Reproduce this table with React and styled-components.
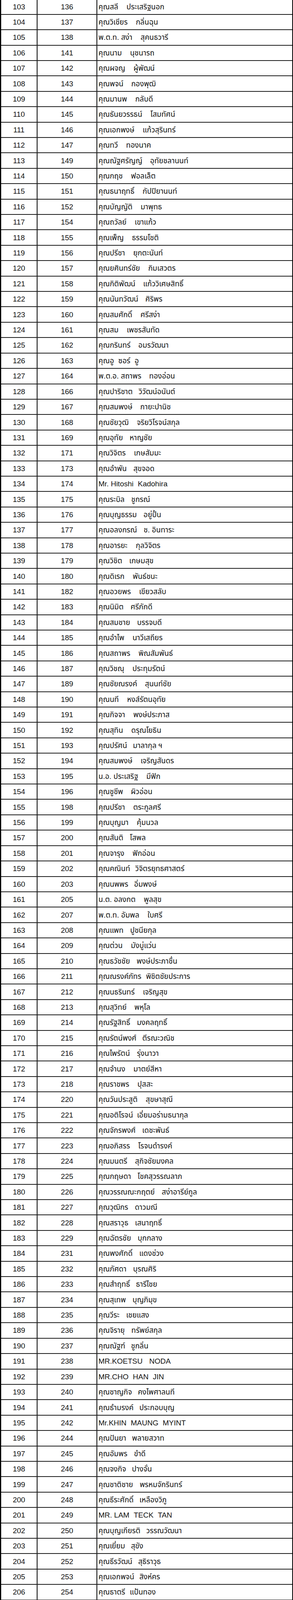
import React from 'react'
import styled, { createGlobalStyle } from 'styled-components'

// 1 px of the 750 px wide sheet, relative to the viewport
const u = n => `calc(${n} * 100vw / 750)`

const GlobalStyle = createGlobalStyle`
  html, body {
    margin: 0;
    padding: 0;
    background: #fff;
    overflow: hidden;
  }
  body {
    font-family: 'Liberation Sans', 'Noto Sans Thai', 'Noto Sans', 'DejaVu Sans', sans-serif;
    color: #111;
  }
`

// [ลำดับ, เลขที่, ชื่อ (ส่วนคั่นด้วย |), ระยะห่าง]
const rows = [
  [103, 136, 'คุณสลี|ประเสริฐนอก', 21],
  [104, 137, 'คุณวิเชียร|กลิ่นฉุน', 21],
  [105, 138, 'พ.ต.ท. สง่า|สุคนธวารี', 21],
  [106, 141, 'คุณนาม|นุชนารถ', 21],
  [107, 142, 'คุณผจญ|ผู้พัฒน์', 21],
  [108, 143, 'คุณพจน์|กองพุฒิ', 20],
  [109, 144, 'คุณมานพ|กลับดี', 21],
  [110, 145, 'คุณธันยวรรธน์|โสมทัศน์', 21],
  [111, 146, 'คุณเอกพงษ์|แก้วสุรินทร์', 21],
  [112, 147, 'คุณทวี|ทองนาค', 21],
  [113, 149, 'คุณณัฐศรัญญ์|อุทัยชลานนท์', 20],
  [114, 150, 'คุณกฤช|ฟอลเล็ต', 21],
  [115, 151, 'คุณธนาฤทธิ์|กัปปิยานนท์', 21],
  [116, 152, 'คุณบัญญัติ|มาพุทธ', 21],
  [117, 154, 'คุณถวัลย์|เขาแก้ว', 21],
  [118, 155, 'คุณเพ็ญ|ธรรมโชติ', 21],
  [119, 156, 'คุณปรีชา|ยุกตะนันท์', 21],
  [120, 157, 'คุณยศินทร์ชัย|กิมเสวตร', 21],
  [121, 158, 'คุณกิติพัฒน์|แก้ววิเศษสิทธิ์', 20],
  [122, 159, 'คุณนันทวัฒน์|ศิริพร', 18],
  [123, 160, 'คุณสมศักดิ์|ศรีสง่า', 21],
  [124, 161, 'คุณสม|เพชรสันทัด', 21],
  [125, 162, 'คุณกรินทร์|อมรวัฒนา', 20],
  [126, 163, 'คุณอู|ซอร์|อู', 11],
  [127, 164, 'พ.ต.อ. สถาพร|ทองอ่อน', 20],
  [128, 166, 'คุณปาริชาต|วิวัฒน์อนันต์', 15],
  [129, 167, 'คุณสมพงษ์|กายะปานิช', 20],
  [130, 168, 'คุณชัยวุฒิ|จริยวิโรจน์สกุล', 21],
  [131, 169, 'คุณอุทัย|หาญชัย', 17],
  [132, 171, 'คุณวิจิตร|เกษสัมมะ', 21],
  [133, 173, 'คุณอำพัน|สุขจอด', 17],
  [134, 174, 'Mr. Hitoshi|Kadohira', 11],
  [135, 175, 'คุณระบิล|ชูกรณ์', 17],
  [136, 176, 'คุณบุญธรรม|อยู่ปั้น', 17],
  [137, 177, 'คุณอลงกรณ์|ช. อินทาระ', 17],
  [138, 178, 'คุณอารยะ|กุลวิจิตร', 21],
  [139, 179, 'คุณวิชิต|เกษมสุข', 18],
  [140, 180, 'คุณดิเรก|พันธ์ชนะ', 21],
  [141, 182, 'คุณอวยพร|เขียวสลับ', 21],
  [142, 183, 'คุณนิมิต|ศรีภักดี', 18],
  [143, 184, 'คุณสมชาย|บรรจบดี', 18],
  [144, 185, 'คุณอำไพ|นาวีเสถียร', 21],
  [145, 186, 'คุณสถาพร|พิณสัมพันธ์', 21],
  [146, 187, 'คุณวิชณุ|ประทุมรัตน์', 21],
  [147, 189, 'คุณชัยณรงค์|สุนนท์ชัย', 20],
  [148, 190, 'คุณนที|หงส์รัตนอุทัย', 21],
  [149, 191, 'คุณกิจจา|พงษ์ประภาส', 21],
  [150, 192, 'คุณสุทิน|ดรุณโยธิน', 21],
  [151, 193, 'คุณปรัศน์|มาลากุล ฯ', 15],
  [152, 194, 'คุณสมพงษ์|เจริญสันดร', 21],
  [153, 195, 'น.อ. ประเสริฐ|มีฟัก', 21],
  [154, 196, 'คุณชูชีพ|ผิวอ่อน', 20],
  [155, 198, 'คุณปรีชา|ตระกูลศรี', 21],
  [156, 199, 'คุณบุญมา|คุ้มนวล', 21],
  [157, 200, 'คุณสันติ|โสพล', 17],
  [158, 201, 'คุณจารุง|ฟักอ่อน', 21],
  [159, 202, 'คุณคณินท์|วิจิตรยุทธศาสตร์', 13],
  [160, 203, 'คุณนพพร|อิ่มพงษ์', 15],
  [161, 205, 'น.ต. อลงกต|พูลสุข', 21],
  [162, 207, 'พ.ต.ท. อัมพล|ใบศรี', 21],
  [163, 208, 'คุณแพท|ปูชนียกุล', 17],
  [164, 209, 'คุณต่วน|มังบู่แว่น', 21],
  [165, 210, 'คุณธวัชชัย|พงษ์ประภาชื่น', 17],
  [166, 211, 'คุณณรงค์ภัทร|พิชิตชัยประการ', 12],
  [167, 212, 'คุณนธรินทร์|เจริญสุข', 21],
  [168, 213, 'คุณสุวิทย์|พหุโล', 20],
  [169, 214, 'คุณรัฐสิทธิ์|มงคลฤทธิ์', 17],
  [170, 215, 'คุณรัตน์พงศ์|ตีรณะวณิช', 15],
  [171, 216, 'คุณไพรัตน์|รุ่งนาวา', 18],
  [172, 217, 'คุณจำนง|มาตย์สีหา', 21],
  [173, 218, 'คุณราชพร|ปุสสะ', 21],
  [174, 220, 'คุณวันประสูติ|สุขษาสุณี', 21],
  [175, 221, 'คุณอติโรจน์|เอี่ยมอร่ามธนากุล', 10],
  [176, 222, 'คุณจักรพงศ์|เดชะพันธ์', 17],
  [177, 223, 'คุณอภิสรร|โรจนดำรงค์', 21],
  [178, 224, 'คุณมนตรี|สุกิจชัยมงคล', 20],
  [179, 225, 'คุณกฤษดา|โชคสุวรรณลาภ', 17],
  [180, 226, 'คุณวรรณณะกฤตย์|สง่าอารีย์กูล', 18],
  [181, 227, 'คุณวุฒิกร|ดาวมณี', 17],
  [182, 228, 'คุณสราวุธ|เสนาฤทธิ์', 17],
  [183, 229, 'คุณฉัตรชัย|บุกกลาง', 17],
  [184, 231, 'คุณพงศักดิ์|แดงช่วง', 17],
  [185, 232, 'คุณภัศดา|บุรณศิริ', 17],
  [186, 233, 'คุณสำฤทธิ์|ธารีไชย', 15],
  [187, 234, 'คุณสุเทพ|บุญภิมุข', 17],
  [188, 235, 'คุณวีระ|เชยแสง', 17],
  [189, 236, 'คุณจิรายุ|ทรัพย์สกุล', 17],
  [190, 237, 'คุณณัฐฑ์|ชูกลิ่น', 15],
  [191, 238, 'MR.KOETSU|NODA', 17],
  [192, 239, 'MR.CHO|HAN|JIN', 11],
  [193, 240, 'คุณชาญกิจ|คงไพศาลนที', 15],
  [194, 241, 'คุณธำมรงค์|ประกอบบุญ', 15],
  [195, 242, 'Mr.KHIN|MAUNG|MYINT', 11],
  [196, 244, 'คุณปันยา|พลายสวาท', 15],
  [197, 245, 'คุณอัมพร|ขำดี', 17],
  [198, 246, 'คุณจงกิจ|ปางจั่น', 15],
  [199, 247, 'คุณชาติชาย|พรหมจักรินทร์', 17],
  [200, 248, 'คุณธีระศักดิ์|เหลืองวิภู', 15],
  [201, 249, 'MR. LAM|TECK|TAN', 11],
  [202, 250, 'คุณบุญเกียรติ|วรรณวัฒนา', 15],
  [203, 251, 'คุณเยี่ยม|สุขัง', 15],
  [204, 252, 'คุณธีรวัฒน์|สุธิราวุธ', 15],
  [205, 253, 'คุณเอกพจน์|สิงห์คร', 13],
  [206, 254, 'คุณธาตรี|แป้นทอง', 12],
]

const Sheet = styled.div`
  display: flex;
  flex-direction: column;
  width: 100vw;
  height: 100vh;
  overflow: hidden;
  box-sizing: border-box;
  border-left: ${u(3)} solid #000;
  border-right: ${u(2)} solid #000;
`

const Row = styled.div`
  flex: 1 1 0;
  min-height: 0;
  display: flex;
  overflow: hidden;
  box-sizing: border-box;
  border-bottom: ${u(2)} solid #1c1c1c;
  &:first-child {
    flex-grow: 0.956;
  }
`

const Cell = styled.div`
  flex: ${p => (p.$left ? '1 1 0' : `0 0 ${u(p.$w)}`)};
  min-width: 0;
  display: flex;
  align-items: center;
  justify-content: ${p => (p.$left ? 'flex-start' : 'center')};
  padding-left: ${p => (p.$left ? u(3) : '0')};
  box-sizing: border-box;
  border-right: ${p => (p.$left ? 'none' : `${u(2)} solid #000`)};
  font-size: ${u(19)};
  line-height: 1;
  white-space: nowrap;
  overflow: hidden;
`

const Gap = styled.span`
  display: inline-block;
  width: ${p => u(p.$w)};
`

const Name = ({ text, gap }) => {
  const parts = text.split('|')
  return (
    <span>
      {parts.map((part, i) => (
        <React.Fragment key={i}>
          {i > 0 && <Gap $w={gap} />}
          {part}
        </React.Fragment>
      ))}
    </span>
  )
}

export default function App() {
  return (
    <>
      <GlobalStyle />
      <Sheet>
        {rows.map(([no, code, name, gap]) => (
          <Row key={no}>
            <Cell $w={93}>{no}</Cell>
            <Cell $w={153}>{code}</Cell>
            <Cell $left>
              <Name text={name} gap={gap} />
            </Cell>
          </Row>
        ))}
      </Sheet>
    </>
  )
}
